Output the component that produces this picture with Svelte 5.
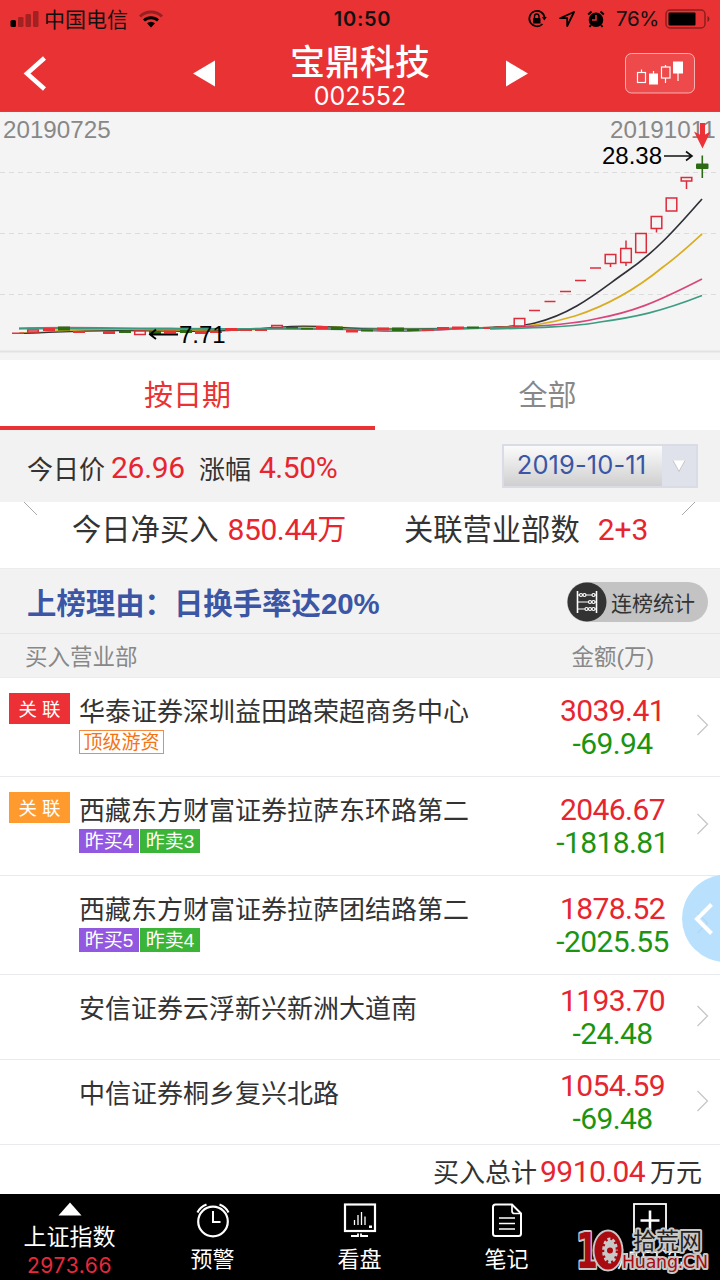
<script lang="ts">
  interface Tag {
    text: string;
    kind: 'outline' | 'buy' | 'sell';
  }

  interface Seat {
    name: string;
    relation?: 'red' | 'orange';
    tags: Tag[];
    buy: string;
    net: string;
  }

  interface Candle {
    x: number;
    top: number;
    bottom: number;
    high?: number;
    low?: number;
  }

  const seats: Seat[] = [
    {
      name: '华泰证券深圳益田路荣超商务中心',
      relation: 'red',
      tags: [{ text: '顶级游资', kind: 'outline' }],
      buy: '3039.41',
      net: '-69.94',
    },
    {
      name: '西藏东方财富证券拉萨东环路第二',
      relation: 'orange',
      tags: [
        { text: '昨买4', kind: 'buy' },
        { text: '昨卖3', kind: 'sell' },
      ],
      buy: '2046.67',
      net: '-1818.81',
    },
    {
      name: '西藏东方财富证券拉萨团结路第二',
      tags: [
        { text: '昨买5', kind: 'buy' },
        { text: '昨卖4', kind: 'sell' },
      ],
      buy: '1878.52',
      net: '-2025.55',
    },
    { name: '安信证券云浮新兴新洲大道南', tags: [], buy: '1193.70', net: '-24.48' },
    { name: '中信证券桐乡复兴北路', tags: [], buy: '1054.59', net: '-69.48' },
  ];

  // Chart coordinates start at the top edge of the chart panel
  const gridLines = [61.5, 122.5, 183.5];

  const rising: Candle[] = [
    { x: 33, top: 219, bottom: 221 },
    { x: 140, top: 220, bottom: 223.5 },
    { x: 277, top: 214.5, bottom: 216.5 },
    { x: 519.5, top: 207.5, bottom: 215 },
    { x: 610.5, top: 143.5, bottom: 152.5, low: 156 },
    { x: 626, top: 137.5, bottom: 151.5, high: 129.5, low: 155 },
    { x: 641, top: 122.5, bottom: 141.5 },
    { x: 656.5, top: 105.5, bottom: 117.5, low: 121.5 },
    { x: 671.5, top: 87, bottom: 100 },
    { x: 686.5, top: 66.5, bottom: 70, low: 78 },
  ];

  // Limit-up days that opened and closed at one price
  const limitUps = [
    { x: 534.5, y: 199.5 },
    { x: 550, y: 190.5 },
    { x: 565.5, y: 180.5 },
    { x: 580.5, y: 169.5 },
    { x: 595.5, y: 157 },
  ];

  const redBars = [
    { x: 18, y: 221.5, h: 1.5 },
    { x: 49, y: 217, h: 3 },
    { x: 79, y: 220, h: 2 },
    { x: 109, y: 220, h: 3 },
    { x: 170, y: 219.5, h: 3 },
    { x: 201, y: 220, h: 3 },
    { x: 216, y: 220, h: 2 },
    { x: 231, y: 217, h: 3 },
    { x: 246, y: 218, h: 2 },
    { x: 261, y: 218, h: 2 },
    { x: 322, y: 215, h: 3 },
    { x: 352, y: 219, h: 2.5 },
    { x: 383, y: 216.5, h: 3 },
    { x: 428, y: 218, h: 2 },
    { x: 443, y: 216, h: 3 },
    { x: 458, y: 215.5, h: 2.5 },
    { x: 489, y: 216, h: 2 },
    { x: 504, y: 215, h: 2 },
  ];

  const greenBars = [
    { x: 64, y: 215.5, h: 4 },
    { x: 125, y: 219.5, h: 2.5 },
    { x: 155, y: 220, h: 3 },
    { x: 186, y: 219, h: 3 },
    { x: 292, y: 216, h: 1.5 },
    { x: 307, y: 217, h: 1.5 },
    { x: 337, y: 215.5, h: 3.5 },
    { x: 367, y: 218.5, h: 2 },
    { x: 398, y: 216.5, h: 3.5 },
    { x: 413, y: 218, h: 2 },
    { x: 473, y: 215.5, h: 2 },
  ];
</script>

<div class="screen">
  <header class="header">
    <div class="status">
      <div class="status__left">
        <svg width="30" height="18" viewBox="0 0 30 18">
          <rect x="0.5" y="10" width="5.5" height="7" rx="1.5" fill="#000" />
          <g fill="#000" opacity="0.3">
            <rect x="8" y="7" width="5.5" height="10" rx="1.2" />
            <rect x="15.5" y="4" width="5.5" height="13" rx="1.2" />
            <rect x="23" y="1" width="5.5" height="16" rx="1.2" />
          </g>
        </svg>
        <span class="carrier">中国电信</span>
        <svg class="wifi" width="26" height="20" viewBox="0 0 26 20" fill="none">
          <path d="M2 7.5a15.5 15.5 0 0 1 22 0" stroke="#000" stroke-width="3" opacity="0.35" />
          <path d="M6 11.5a10 10 0 0 1 14 0" stroke="#000" stroke-width="3" />
          <path d="M13 18.5l-4-4.2a5.8 5.8 0 0 1 8 0z" fill="#000" />
        </svg>
      </div>
      <span class="clock">10:50</span>
      <div class="status__right">
        <svg width="20" height="20" viewBox="0 0 20 20" fill="none" stroke="#000" stroke-width="1.7">
          <path d="M15.5 15a7.7 7.7 0 1 1 2.2-6" />
          <path d="M14.8 8h5l-2.5 3.5z" fill="#000" stroke="none" />
          <rect x="6" y="9" width="7.5" height="5.6" rx="0.7" fill="#000" stroke="none" />
          <path d="M7.5 9V7.3a2.2 2.2 0 0 1 4.5 0V9" stroke-width="1.4" />
        </svg>
        <svg width="18" height="18" viewBox="0 0 18 18" fill="none" stroke="#000" stroke-width="1.8">
          <path d="M16 2L2 8.2h7.2V16z" stroke-linejoin="round" />
        </svg>
        <svg width="18" height="18" viewBox="0 0 18 18">
          <circle cx="9" cy="9.8" r="7.3" fill="#000" />
          <path d="M1.2 4.5L4.5 1.5M16.8 4.5L13.5 1.5M4 15l-1.5 2M14 15l1.5 2" stroke="#000" stroke-width="2" />
          <path d="M9 5v5H5" fill="none" stroke="#e93233" stroke-width="1.5" />
        </svg>
        <span class="percent">76%</span>
        <svg width="46" height="20" viewBox="0 0 46 20">
          <rect x="1" y="1" width="39" height="18" rx="4" fill="none" stroke="#000" stroke-opacity="0.4" stroke-width="1.5" />
          <rect x="3.5" y="3.5" width="27" height="13" rx="1" fill="#000" />
          <path d="M42.5 7v6q2-1 2-3t-2-3z" fill="#000" fill-opacity="0.45" />
        </svg>
      </div>
    </div>

    <div class="nav">
      <svg class="nav__back" width="26" height="38" viewBox="0 0 26 38" fill="none" stroke="#fff" stroke-width="4.5">
        <path d="M22.5 3L5 18.5L22.500 34" />
      </svg>
      <svg class="nav__prev" width="24" height="28" viewBox="0 0 24 28" fill="#fff">
        <path d="M1 13.500L23 0.500v26z" />
      </svg>
      <div class="nav__title">
        <h1>宝鼎科技</h1>
        <span>002552</span>
      </div>
      <svg class="nav__next" width="24" height="28" viewBox="0 0 24 28" fill="#fff">
        <path d="M23 13.500L1 0.500v26z" />
      </svg>
      <svg class="nav__kline" width="70" height="41" viewBox="0 0 70 41">
        <rect x="0.5" y="0.5" width="69" height="39.5" rx="6" fill="#ee4a4b" stroke="#fff" stroke-opacity="0.6" />
        <g fill="none" stroke="#fff" stroke-width="1.2">
          <rect x="12.5" y="19.5" width="8" height="10" />
          <path d="M16.500 16.500v3M28.500 18v3M40.500 12v2M40.500 25v5M53 20v8" />
          <rect x="36.500" y="14" width="8.500" height="11" />
        </g>
        <rect x="24" y="20.500" width="9" height="11" fill="#fff" />
        <rect x="48" y="8.500" width="10" height="12" fill="#fff" />
      </svg>
    </div>
  </header>

  <svg class="chart" width="720" height="249" viewBox="0 0 720 249" fill="none">
    <path d="M0 0.500H720" stroke="#c9474a" />
    {#each gridLines as y}
      <path d="M0 {y}H720" stroke="#dcdcdc" stroke-dasharray="5 4" />
    {/each}
    <path d="M0 240.500H720" stroke="#e2e2e2" stroke-width="2" />
    <text x="3" y="26.500" class="chart__date">20190725</text>
    <text x="610" y="26.500" class="chart__date">20191011</text>

    <path d="M19 217.500C70 215 110 217 170 218.500S290 214 350 218.500S430 218 519 215.500" stroke="#c95083" stroke-width="1.500" />
    <path d="M19 222C45 222 55 219 80 219S200 219.500 240 219S290 215 330 216S370 219 519 216" stroke="#dbaa1b" stroke-width="1.500" />
    <path d="M19 222.500C50 222 80 218.500 150 220S240 219 280 216S340 218 380 218S490 217.500 519 214.500" stroke="#333" stroke-width="1.200" />
    <path d="M19 217.500H170C220 218.500 300 217 360 218.500H430L519 216" stroke="#3c9a80" stroke-width="1.800" />

    {#each redBars as bar}
      <rect x={bar.x - 6} y={bar.y} width="12" height={bar.h} fill="#e73238" />
    {/each}
    {#each greenBars as bar}
      <rect x={bar.x - 6} y={bar.y} width="12" height={bar.h} fill="#2b6b13" />
    {/each}
    {#each limitUps as day}
      <path d="M{day.x - 5.5} {day.y}h11" stroke="#e02c3b" stroke-width="1.500" />
    {/each}

    <g stroke-width="1.700">
      <path d="M490 217C505 216 525 215 535 212C575 202 600 179 626 161C657 140 680 113 702 88" stroke="#303138" />
      <path d="M490 217C530 216 552 212 575 205C612 193 640 175 663 156C677 146 690 134 702 123" stroke="#daad20" />
      <path d="M490 217C530 216 570 214 595 208C633 201 655 192 702 168" stroke="#d8467b" />
      <path d="M490 218C530 217 575 216 600 211C635 206 660 201 702 184.500" stroke="#3e9c82" />
    </g>

    {#each rising as candle}
      {#if candle.high}
        <path d="M{candle.x} {candle.high}V{candle.top}" stroke="#dc2b3b" stroke-width="1.500" />
      {/if}
      {#if candle.low}
        <path d="M{candle.x} {candle.bottom}V{candle.low}" stroke="#dc2b3b" stroke-width="1.500" />
      {/if}
      <rect
        x={candle.x - 5.3}
        y={candle.top}
        width="10.6"
        height={candle.bottom - candle.top}
        fill="#f4f4f4"
        stroke="#dc2b3b"
        stroke-width="1.500"
      />
    {/each}

    <path d="M702.300 44.500V67" stroke="#2b6b13" stroke-width="1.600" />
    <rect x="696" y="52.500" width="12.500" height="5.500" rx="1" fill="#2b6b13" />
    <path d="M702.500 12V28" stroke="#ec3237" stroke-width="5" />
    <path d="M694 20.500L702.500 25L710.500 20.500L702.500 37.500z" fill="#ec3237" />
    <text x="602" y="53" class="chart__price">28.38</text>
    <path d="M664 45H691M686 40.500L692 45L686 49.500" stroke="#111" stroke-width="1.600" />
    <text x="179" y="232" class="chart__price">7.71</text>
    <path d="M178 223.500H151M156 218.500L150 223.500L156 228" stroke="#000" stroke-width="1.800" />
  </svg>

  <nav class="tabs">
    <button class="tab tab--active">按日期</button>
    <button class="tab">全部</button>
  </nav>

  <section class="quote">
    <span>今日价</span>
    <b class="num quote__price">26.96</b>
    <span class="quote__label">涨幅</span>
    <b class="num quote__rate">4.50%</b>
    <div class="date">
      <span class="date__value">2019-10-11</span>
      <span class="date__arrow">
        <svg width="14" height="14" viewBox="0 0 14 14">
          <path d="M1 1.500H13L7 12.500z" fill="#fff" />
          <path d="M13 1.500L7 12.500L1 1.500" fill="none" stroke="#bbb" stroke-width="0.800" />
        </svg>
      </span>
    </div>
  </section>

  <section class="summary">
    <svg class="summary__corner" width="14" height="14" viewBox="0 0 14 14">
      <path d="M0 0L13 13" stroke="#aaa" />
    </svg>
    <span class="summary__net">今日净买入</span>
    <b class="num summary__amount">850.44<i>万</i></b>
    <span class="summary__linked">关联营业部数</span>
    <b class="num summary__count">2+3</b>
    <svg class="summary__corner summary__corner--right" width="14" height="14" viewBox="0 0 14 14">
      <path d="M0 13L13 0" stroke="#aaa" />
    </svg>
  </section>

  <section class="reason">
    <h2>上榜理由：日换手率达20%</h2>
    <button class="stats">
      <svg width="40" height="40" viewBox="0 0 40 40" fill="none" stroke="#fff">
        <circle cx="20" cy="20" r="19.500" fill="#333" stroke="none" />
        <path d="M10.500 9V31M29.500 9V31" stroke-width="1.600" />
        <path d="M10.500 13H29.500M10.500 20H29.500M10.500 27H29.500" stroke-width="1.100" />
        <g fill="#333" stroke-width="1.200">
          <circle cx="14" cy="13" r="1.500" />
          <circle cx="17.500" cy="13" r="1.500" />
          <circle cx="26.500" cy="13" r="1.500" />
          <circle cx="23" cy="20" r="1.500" />
          <circle cx="26.500" cy="20" r="1.500" />
          <circle cx="19.500" cy="27" r="1.500" />
          <circle cx="23" cy="27" r="1.500" />
          <circle cx="26.500" cy="27" r="1.500" />
        </g>
      </svg>
      <span>连榜统计</span>
    </button>
  </section>

  <div class="thead">
    <span>买入营业部</span>
    <span class="thead__amount">金额(万)</span>
  </div>

  <ul class="seats">
    {#each seats as seat}
      <li class="seat" class:seat--short={!seat.tags.length}>
        <div class="seat__relation">
          {#if seat.relation}
            <span class="relation relation--{seat.relation}">关 联</span>
          {/if}
        </div>
        <div class="seat__body">
          <p class="seat__name">{seat.name}</p>
          {#if seat.tags.length}
            <div class="seat__tags">
              {#each seat.tags as tag}
                <span class="tag tag--{tag.kind}">{tag.text}</span>
              {/each}
            </div>
          {/if}
        </div>
        <div class="seat__amounts num">
          <span>{seat.buy}</span>
          <span class="seat__net">{seat.net}</span>
        </div>
        <svg class="seat__more" width="13" height="22" viewBox="0 0 13 22" fill="none">
          <path d="M1.500 1L11.500 11L1.500 21" stroke="#c4c4c4" stroke-width="1.200" />
        </svg>
      </li>
    {/each}
  </ul>

  <div class="total">
    <span>买入总计</span>
    <b class="num">9910.04</b>
    <span>万元</span>
  </div>

  <footer class="toolbar">
    <div class="tool tool--index">
      <svg width="24" height="14" viewBox="0 0 24 14"><path d="M12 0.500L23.500 13.500H0.500z" fill="#fff" /></svg>
      <span>上证指数</span>
      <em>2973.66</em>
    </div>
    <div class="tool">
      <svg width="36" height="36" viewBox="0 0 36 36" fill="none" stroke="#fff" stroke-width="2.200">
        <circle cx="18" cy="19.500" r="14.800" />
        <path d="M18 9V20H25.500" stroke-width="2" />
        <path d="M2.500 10.500Q5 5 11.500 2.500M33.500 10.500Q31 5 24.500 2.500" />
      </svg>
      <span>预警</span>
    </div>
    <div class="tool">
      <svg width="36" height="36" viewBox="0 0 36 36" fill="none" stroke="#fff" stroke-width="2.200">
        <rect x="3" y="2.500" width="30" height="26.500" />
        <path d="M12.500 18V23M16 13V23M19.500 10V23M23 14.500V23" stroke-width="1.300" />
        <path d="M9 34H16V31.500M26 34H19V31.500" stroke-width="1.800" />
        <rect x="27" y="23.500" width="3" height="2.500" fill="#fff" stroke="none" />
      </svg>
      <span>看盘</span>
    </div>
    <div class="tool">
      <svg width="36" height="36" viewBox="0 0 36 36" fill="none" stroke="#fff" stroke-width="2">
        <path d="M4 5Q4 2.500 6.500 2.500H23L32 11.500V31.500Q32 34 29.500 34H6.500Q4 34 4 31.500z" />
        <path d="M23 2.500V9Q23 11.500 25.500 11.500H32" stroke-width="1.700" />
        <path d="M10 16H26M10 21.500H26M10 27H26" stroke-width="1.500" />
      </svg>
      <span>笔记</span>
    </div>
    <div class="tool tool--last">
      <svg width="36" height="36" viewBox="0 0 36 36" fill="none" stroke="#fff">
        <rect x="2" y="2" width="32" height="32" stroke-width="1.800" />
        <path d="M18 8.500V28M8.500 18.500H27.500" stroke-width="2.600" />
      </svg>
      <span>加自选</span>
    </div>
  </footer>

  <div class="drawer">
    <svg width="22" height="34" viewBox="0 0 22 34" fill="none">
      <path d="M18.500 2.500L4 17L18.500 31.500" stroke="#fff" stroke-width="4" />
    </svg>
  </div>

  <svg class="watermark" width="145" height="64" viewBox="0 0 145 64">
    <text x="1" y="52" class="watermark__ten" textLength="22" lengthAdjust="spacingAndGlyphs">1</text>
    <ellipse cx="33" cy="34.500" rx="15.500" ry="21" fill="#c8c8c8" />
    <ellipse cx="33" cy="34.500" rx="13.500" ry="19" />
    <ellipse cx="35" cy="34.500" rx="8" ry="13" fill="#c8c8c8" />
    <ellipse cx="35" cy="34.500" rx="7.500" ry="12.500" fill="none" stroke="#a90b10" stroke-width="3.500" stroke-dasharray="2.500 3.500" />
    <circle cx="35" cy="34.500" r="3" />
    <text x="47" y="52" class="watermark__en" textLength="86">Huang.CN</text>
    <text x="58" y="33" class="watermark__cn">拾荒网</text>
  </svg>
</div>

<style>
  :global(body) {
    margin: 0;
  }

  .screen {
    position: relative;
    display: flex;
    flex-direction: column;
    width: 720px;
    height: 1280px;
    overflow: hidden;
    background: #fff;
    color: #333;
    font-family: 'Liberation Sans', 'Noto Sans CJK SC', sans-serif;
  }

  svg {
    display: block;
    flex: none;
  }

  span,
  b,
  h1,
  h2 {
    white-space: nowrap;
  }

  button {
    padding: 0;
    border: 0;
    font-family: inherit;
  }

  .num {
    font-family: Roboto, 'Noto Sans CJK SC', sans-serif;
    font-size: 30px;
    font-weight: 400;
    color: #e6252f;
  }

  /* Header */
  .header {
    height: 111px;
    background: #e93233;
  }

  .status {
    display: grid;
    grid-template-columns: 1fr auto 1fr;
    align-items: center;
    height: 36px;
    padding: 0 9px 0 10px;
    color: #111;
  }

  .status__left,
  .status__right {
    display: flex;
    align-items: center;
  }

  .carrier {
    margin-left: 4px;
    padding-top: 2px;
    font-size: 21px;
    line-height: 30px;
  }

  .wifi {
    margin-left: 10px;
  }

  .clock {
    padding: 1px 0 0 4px;
    font: 600 20px/36px Inter, sans-serif;
    letter-spacing: 0.7px;
  }

  .status__right {
    justify-content: flex-end;
    gap: 11px;
  }

  .percent {
    margin-right: -5px;
    font: 400 20.5px/36px Inter, sans-serif;
    letter-spacing: -0.4px;
  }

  .nav {
    display: flex;
    align-items: center;
    height: 75px;
  }

  .nav__back {
    margin-left: 22px;
  }

  .nav__prev {
    margin-left: 144px;
  }

  .nav__title {
    display: flex;
    flex-direction: column;
    align-items: center;
    width: 140px;
    margin-left: 74px;
    color: #fff;
  }

  .nav__title h1 {
    margin: 0;
    font-size: 35px;
    font-weight: 500;
    line-height: 46px;
  }

  .nav__title span {
    margin-top: -1px;
    font: 400 25px/22px Inter, sans-serif;
  }

  .nav__next {
    margin-left: 75px;
  }

  .nav__kline {
    margin-left: 96px;
  }

  /* Chart */
  .chart {
    background: #f4f4f4;
  }

  .chart__date {
    fill: #888;
    font-size: 24.2px;
  }

  .chart__price {
    fill: #000;
    font-size: 24px;
  }

  /* Tabs */
  .tabs {
    display: flex;
    height: 70px;
  }

  .tab {
    box-sizing: border-box;
    width: 345px;
    height: 70px;
    padding-top: 7px;
    background: #fff;
    color: #888;
    font-size: 29px;
    line-height: 59px;
    border-bottom: 4px solid transparent;
  }

  .tab--active {
    width: 375px;
    color: #e93233;
    border-bottom-color: #e93233;
  }

  /* Quote */
  .quote {
    display: flex;
    align-items: center;
    height: 72px;
    padding: 2px 22px 0 27px;
    background: #f2f2f2;
    font-size: 26px;
    box-sizing: border-box;
  }

  .quote__price {
    margin-left: 6px;
    letter-spacing: -0.3px;
  }

  .quote__label {
    margin-left: 14px;
  }

  .quote__rate {
    margin-left: 8px;
    letter-spacing: -0.4px;
  }

  .date {
    display: flex;
    box-sizing: border-box;
    width: 196px;
    height: 44px;
    margin-top: -2px;
    margin-left: auto;
    border: 2px solid #d9dce4;
    background: #dfe2eb;
  }

  .date__value {
    box-sizing: border-box;
    width: 158px;
    padding-right: 3px;
    text-align: center;
    color: #3a56a5;
    font: 400 25.5px/38px Inter, sans-serif;
    letter-spacing: 0.1px;
    background: linear-gradient(#fbfbfb, #cfcfcf);
  }

  .date__arrow {
    display: flex;
    flex: 1;
    align-items: center;
    justify-content: center;
  }

  /* Summary */
  .summary {
    display: flex;
    align-items: center;
    height: 67px;
    font-size: 29.3px;
    padding: 0 24px;
    line-height: 56px;
    box-sizing: border-box;
    border-bottom: 1px solid #ececec;
  }

  .summary__corner {
    align-self: flex-start;
  }

  .summary__corner--right {
    margin-left: auto;
  }

  .summary span,
  .summary b {
    align-self: flex-start;
  }

  .summary__net {
    margin-left: 34px;
  }

  .summary__amount {
    margin-left: 9px;
    letter-spacing: -0.4px;
  }

  .summary__amount i {
    font-style: normal;
    font-size: 29px;
  }

  .summary__linked {
    margin-left: 58px;
  }

  .summary__count {
    margin-left: 18px;
  }

  /* Reason */
  .reason {
    display: flex;
    align-items: center;
    justify-content: space-between;
    height: 65px;
    padding: 2px 12px 0 27px;
    box-sizing: border-box;
    background: #f2f2f2;
    border-bottom: 1px solid #e6e6e6;
  }

  .reason h2 {
    margin: 0;
    padding-top: 3px;
    color: #3a56a5;
    font-size: 29.4px;
    line-height: 58px;
  }

  .stats {
    display: flex;
    align-items: center;
    width: 141px;
    height: 40px;
    border-radius: 20px;
    background: #c3c3c3;
    color: #333;
    font-size: 21px;
  }

  .stats span {
    margin-left: 4px;
  }

  .thead {
    display: flex;
    height: 44px;
    padding: 2px 0 0 25px;
    box-sizing: border-box;
    border-bottom: 1px solid #ececec;
    background: #f2f2f2;
    color: #888;
    font-size: 22.5px;
    line-height: 43px;
  }

  .thead__amount {
    margin-left: 434px;
  }

  /* Seats */
  .seats {
    margin: 0;
    padding: 0;
    list-style: none;
  }

  .seat {
    display: flex;
    height: 99px;
    padding-left: 9px;
    box-sizing: border-box;
    border-bottom: 1px solid #e8eaee;
  }

  .seat--short {
    height: 85px;
  }

  .seat__relation {
    width: 70px;
    padding-top: 15px;
  }

  .relation {
    display: block;
    width: 61px;
    height: 31px;
    color: #fff;
    font-size: 18.5px;
    line-height: 33px;
    text-align: center;
  }

  .relation--red {
    background: #ec3035;
  }

  .relation--orange {
    background: #ff9b2e;
  }

  .seat__body {
    width: 456px;
  }

  .seat__name {
    margin: 0;
    padding-top: 16px;
    font-size: 26px;
    line-height: 36px;
  }

  .seat__tags {
    display: flex;
    gap: 1px;
  }

  .tag {
    height: 24px;
    width: 60px;
    box-sizing: border-box;
    color: #fff;
    font-size: 19px;
    line-height: 26px;
    text-align: center;
  }

  .tag--outline {
    width: 85px;
    border: 1px solid #f58a42;
    color: #f5740f;
    line-height: 24px;
  }

  .tag--buy {
    background: #9258e0;
  }

  .tag--sell {
    background: #3bb537;
  }

  .seat__amounts {
    display: flex;
    flex-direction: column;
    align-items: center;
    width: 155px;
    padding-top: 16px;
    line-height: 33px;
    letter-spacing: -0.6px;
  }

  .seat--short .seat__amounts {
    padding-top: 9px;
  }

  .seat__net {
    color: #1c9410;
  }

  .seat__more {
    margin-top: 36px;
    margin-left: 6px;
  }

  .seat--short .seat__more {
    margin-top: 30px;
  }

  /* Total */
  .total {
    display: flex;
    align-items: center;
    justify-content: flex-end;
    height: 49px;
    padding-right: 18px;
    font-size: 26px;
    line-height: 49px;
  }

  .total span {
    padding-top: 8px;
  }

  .total b {
    margin: 0 5px 0 3px;
    padding-top: 4px;
    letter-spacing: -0.6px;
  }

  /* Toolbar */
  .toolbar {
    display: flex;
    height: 86px;
    background: #000;
    color: #fff;
    font-size: 22px;
  }

  .tool {
    display: flex;
    flex: none;
    flex-direction: column;
    align-items: center;
    width: 147px;
    padding-top: 8px;
    line-height: 32px;
  }

  .tool--last {
    width: 140px;
  }

  .tool span {
    margin-top: 6px;
  }

  .tool--index {
    width: 139px;
  }

  .tool--index span {
    margin-top: 5px;
    font-size: 23px;
    line-height: 33px;
  }

  .tool em {
    color: #e8283c;
    font: 400 21px/24px 'Inter', sans-serif;
    letter-spacing: 0.6px;
  }

  /* Floating drawer handle */
  .drawer {
    position: absolute;
    top: 875px;
    left: 682px;
    display: flex;
    align-items: center;
    width: 87px;
    height: 87px;
    padding-left: 11px;
    box-sizing: border-box;
    border-radius: 50%;
    background: rgba(170, 219, 253, 0.82);
  }

  .watermark {
    position: absolute;
    top: 1216px;
    left: 575px;
    overflow: visible;
    fill: #a90b10;
  }

  .watermark text {
    paint-order: stroke;
    stroke: #c8c8c8;
    stroke-width: 4px;
    stroke-linejoin: round;
  }

  .watermark__ten {
    font: bold 49px 'DejaVu Sans', sans-serif;
  }

  .watermark__cn {
    fill: #222;
    font-size: 23px;
  }

  .watermark__en {
    font: 17.5px 'DejaVu Sans', sans-serif;
  }
</style>
